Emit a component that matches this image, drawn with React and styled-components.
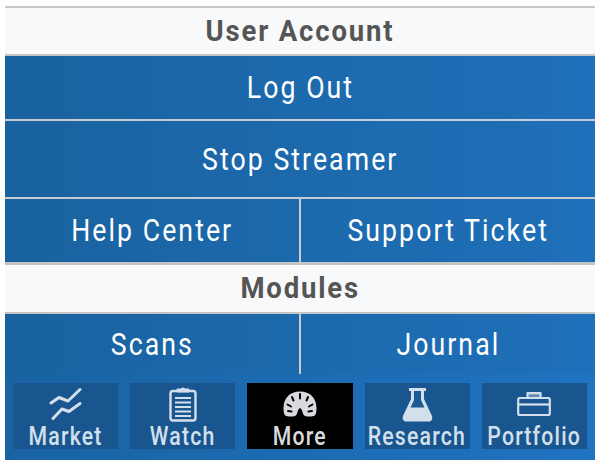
import React from 'react';
import styled, { createGlobalStyle } from 'styled-components';

const GlobalStyle = createGlobalStyle`
    html, body {
        margin: 0;
        padding: 0;
        background: #fff;
        font-family: Roboto, "Liberation Sans", sans-serif;
    }
`;

function MarketIcon() {
    return (
        <svg width="34" height="34" viewBox="0 0 34 34" fill="none" stroke="currentColor" strokeWidth="3" strokeLinecap="round" strokeLinejoin="round">
            <path d="M2 16 L10 10.500 L19 14 L31 2.500" />
            <path d="M4 31.500 L13 22 L20 24.500 L31 16.500" />
        </svg>
    );
}

function WatchIcon() {
    return (
        <svg width="28" height="35" viewBox="0 0 28 35" fill="none" stroke="currentColor" strokeWidth="2.4">
            <rect x="1.500" y="4" width="25" height="29.500" rx="2.500" />
            <path d="M8 5 V2 H12 C12.500 0.800 15.500 0.800 16 2 H20 V5 Z" fill="currentColor" strokeWidth="1" />
            <path d="M6 11 H22 M6 15.500 H22 M6 20 H22 M6 24.500 H22 M6 29 H22" strokeWidth="2.200" />
        </svg>
    );
}

function MoreIcon() {
    return (
        <svg width="34" height="26" viewBox="0 0 34 26">
            <path fill="currentColor" d="M17 0.500 C7 0.500 0.500 7 0.500 17 C0.500 21 1 23.500 2.500 24.800 C4 25.800 10 25.800 12 25 C13.500 24.300 14 23 14.500 21 C15 19 16 17.500 17 17 C18 17.500 19 19 19.500 21 C20 23 20.500 24.300 22 25 C24 25.800 30 25.800 31.500 24.800 C33 23.500 33.500 21 33.500 17 C33.500 7 27 0.500 17 0.500 Z" />
            <path stroke="#000" strokeWidth="2" strokeLinecap="round" fill="none" d="M17 3 V7.500 M9 6 L10.500 9.500 M25 6 L23.500 9.500 M4.500 13.500 L8 15.500 M29.500 13.500 L26 15.500 M5 20 L8.500 20.500 M29 20 L25.500 20.500" />
        </svg>
    );
}

function ResearchIcon() {
    return (
        <svg width="31" height="35" viewBox="0 0 31 35" fill="none">
            <path d="M7 1 H24 V4 H22 V12 L30 29 C31 32 29.500 34.500 27 34.500 H4 C1.500 34.500 0 32 1 29 L9 12 V4 H7 Z" fill="currentColor" />
            <path d="M12 4 H19 V13 L22.500 20.500 H8.500 L12 13 Z" fill="#1a5a96" />
        </svg>
    );
}

function PortfolioIcon() {
    return (
        <svg width="34" height="24" viewBox="0 0 34 24" fill="none" stroke="currentColor" strokeWidth="2.200" strokeLinejoin="round">
            <rect x="1.200" y="6" width="31.600" height="17" rx="1.500" />
            <path d="M1.200 12.500 H32.800" />
            <path d="M10.500 6 V1.200 H23.500 V6" fill="currentColor" fillOpacity="0.4" />
        </svg>
    );
}

const navItems = [
    { label: 'Market', Icon: MarketIcon },
    { label: 'Watch', Icon: WatchIcon },
    { label: 'More', Icon: MoreIcon, active: true },
    { label: 'Research', Icon: ResearchIcon },
    { label: 'Portfolio', Icon: PortfolioIcon },
];

function App() {
    return (
        <>
            <GlobalStyle />
            <Panel>
                <SectionTitle><TitleText>User Account</TitleText></SectionTitle>
                <Row $height={65}><Action><ActionText>Log Out</ActionText></Action></Row>
                <Row $height={78}><Action><ActionText>Stop Streamer</ActionText></Action></Row>
                <Row $height={66} $thick>
                    <Action><ActionText>Help Center</ActionText></Action>
                    <Action><ActionText>Support Ticket</ActionText></Action>
                </Row>
                <SectionTitle $tall><TitleText>Modules</TitleText></SectionTitle>
                <Row $height={60} $last>
                    <Action><ActionText>Scans</ActionText></Action>
                    <Action><ActionText>Journal</ActionText></Action>
                </Row>
                <NavBar>
                    {navItems.map(({ label, Icon, active }) => (
                        <NavTile key={label} $active={active}>
                            <IconSlot><Icon /></IconSlot>
                            <NavLabel>{label}</NavLabel>
                        </NavTile>
                    ))}
                </NavBar>
            </Panel>
        </>
    );
}

const Panel = styled.div`
    box-sizing: border-box;
    width: 590px;
    height: 454px;
    margin: 6px 0 0 5px;
    border-top: 2px solid #c8c8c8;
    background: linear-gradient(90deg, #19629f, #1f70ba);
    display: flex;
    flex-direction: column;
`;

const SectionTitle = styled.div`
    box-sizing: border-box;
    height: ${p => (p.$tall ? 49 : 48)}px;
    flex: none;
    background: #f8f9fb;
    border-bottom: 2px solid #c4c4c4;
    padding-bottom: 2px;
    display: flex;
    align-items: center;
    justify-content: center;
`;

const TitleText = styled.span`
    display: inline-block;
    color: #555;
    font-size: 30px;
    font-weight: 700;
    letter-spacing: 2px;
    white-space: nowrap;
    transform: scaleX(0.917);
`;

const Row = styled.div`
    height: ${p => p.$height}px;
    flex: none;
    box-sizing: border-box;
    display: flex;
    border-bottom: ${p => (p.$last ? 'none' : p.$thick ? '3px solid #c4c4c4' : '2px solid #c8ccd2')};
`;

const Action = styled.div`
    flex: 1 1 0;
    display: flex;
    align-items: center;
    justify-content: center;
    & + & {
        border-left: 2px solid #c8ccd2;
    }
`;

const ActionText = styled.span`
    display: inline-block;
    color: #fff;
    font-size: 31px;
    letter-spacing: 2.4px;
    white-space: nowrap;
    transform: scaleX(0.86);
`;

const NavBar = styled.div`
    flex: 1;
    display: flex;
    gap: 12px;
    padding: 9px 8px 11px;
    background: linear-gradient(90deg, #1963a3, #2073c1);
`;

const NavTile = styled.div`
    flex: 1 1 0;
    min-width: 0;
    display: flex;
    flex-direction: column;
    align-items: center;
    background: ${p => (p.$active ? '#000' : '#19568f')};
    color: ${p => (p.$active ? '#d8dadd' : '#d3e0ec')};
`;

const IconSlot = styled.div`
    height: 42px;
    display: flex;
    align-items: center;
    justify-content: center;
`;

const NavLabel = styled.div`
    font-size: 25px;
    font-weight: 500;
    letter-spacing: 1.4px;
    line-height: 24px;
    white-space: nowrap;
    transform: scaleX(0.85);
`;

export default App;
